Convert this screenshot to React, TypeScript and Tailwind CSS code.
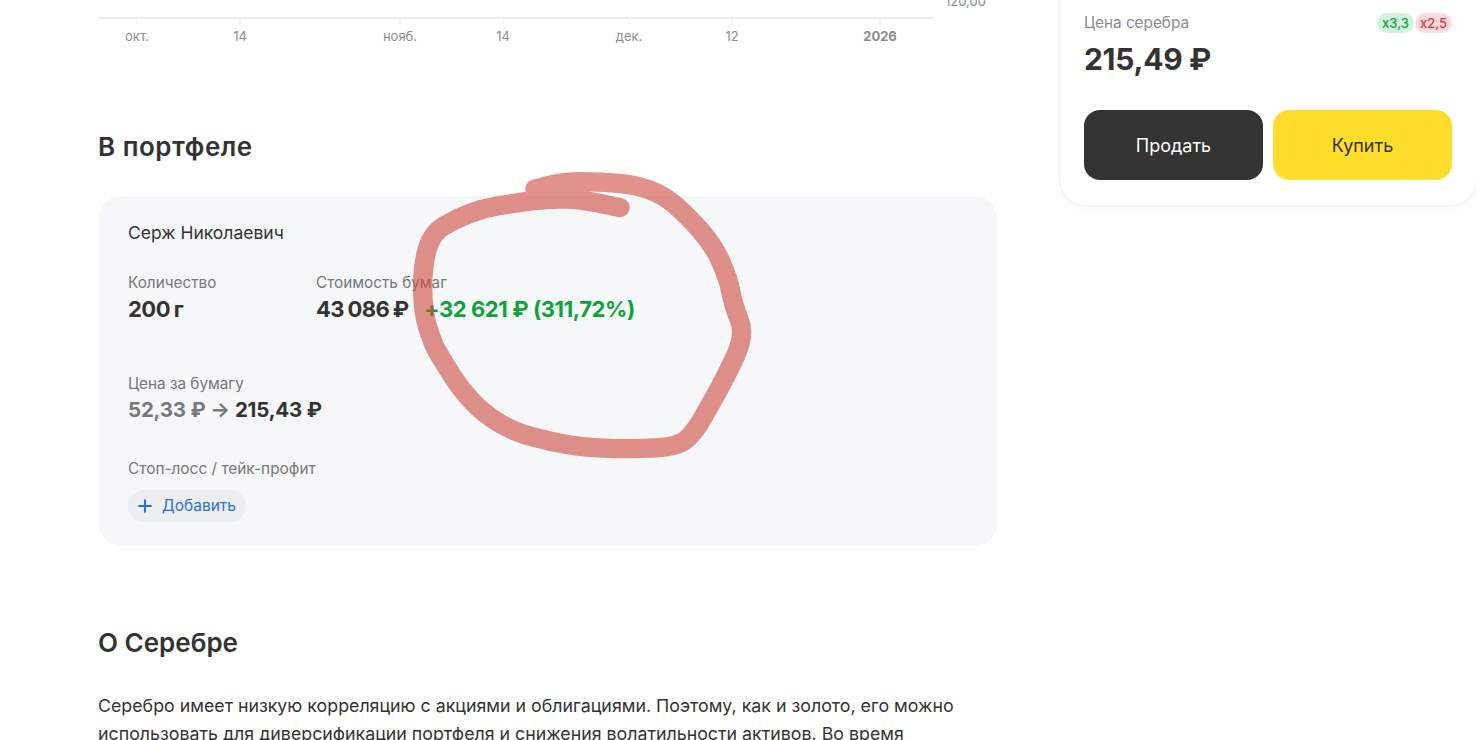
import { Plus } from "lucide-react";

// x positions of the chart's time axis labels; ticks sit on the same spots
const AXIS_TICKS = [
  { label: "окт.", x: 39 },
  { label: "14", x: 142 },
  { label: "нояб.", x: 302 },
  { label: "14", x: 405 },
  { label: "дек.", x: 531 },
  { label: "12", x: 634 },
  { label: "2026", x: 782, bold: true },
];

// Centre line of the marker stroke, in 3x crop coordinates
const MARKER_POINTS = [
  [660, 128], [560, 105], [450, 100], [340, 115], [250, 130], [170, 160], [95, 205], [68, 300],
  [68, 440], [100, 540], [130, 590], [180, 670], [250, 745], [340, 800], [450, 830], [560, 848],
  [700, 852], [835, 845], [885, 800], [930, 720], [975, 640], [1036, 510], [1000, 420], [985, 340],
  [940, 240], [860, 150], [790, 90], [710, 60], [600, 50], [490, 50], [405, 72],
];

// Round the corners: quadratic segments through the midpoints
function smoothPath(points: number[][]) {
  let d = `M${points[0][0]} ${points[0][1]}`;
  for (let i = 1; i < points.length - 1; i++) {
    const [x, y] = points[i];
    const [nx, ny] = points[i + 1];
    d += ` Q${x} ${y} ${(x + nx) / 2} ${(y + ny) / 2}`;
  }
  const last = points[points.length - 1];
  return `${d} L${last[0]} ${last[1]}`;
}

function PriceChart() {
  return (
    <svg width="900" height="48" viewBox="0 0 900 48" className="block">
      <line x1="0" y1="18" x2="836" y2="18" stroke="#e8e9eb" strokeWidth="1.5" />
      {AXIS_TICKS.map((t) => (
        <g key={t.label + t.x}>
          <line x1={t.x} y1="18" x2={t.x} y2="24" stroke="#e8e9eb" />
          <text
            x={t.x}
            y="41"
            textAnchor="middle"
            fontSize="13"
            fontWeight={t.bold ? 700 : 400}
            fill="#8b8c8e"
          >
            {t.label}
          </text>
        </g>
      ))}
      <text x="847" y="6" fontSize="13" fill="#8b8c8e">
        120,00
      </text>
    </svg>
  );
}

// Hand-drawn marker circle lying over the portfolio card
function MarkerCircle() {
  return (
    <svg
      viewBox="0 0 1110 900"
      className="absolute left-[400px] top-[165px] w-[370px] h-[300px] opacity-60 pointer-events-none"
    >
      <path
        d={smoothPath(MARKER_POINTS)}
        fill="none"
        stroke="#cf4a3e"
        strokeWidth="58"
        strokeLinecap="round"
        strokeLinejoin="round"
      />
    </svg>
  );
}

export default function App() {
  return (
    <div className="relative h-[740px] overflow-hidden bg-white font-['Inter',sans-serif] text-[#333333]">
      <div className="flex items-start">
        <main className="ml-[98px] w-[900px] shrink-0">
          <PriceChart />

          <h2 className="mt-[82px] text-[26px] leading-[34px] font-semibold tracking-[0.5px]">В портфеле</h2>

          <section className="mt-[32px] h-[350px] rounded-[24px] bg-[#f6f7f8] px-[30px] pt-[25px]">
            <div className="text-[17.5px] leading-6">Серж Николаевич</div>

            <div className="mt-[28px] flex">
              <div className="w-[188px]">
                <div className="text-[15.3px] leading-5 text-[#77787a]">Количество</div>
                <div className="mt-[3px] text-[22px] leading-[26px] font-bold tracking-[-0.5px] [word-spacing:-1px]">
                  200 г
                </div>
              </div>
              <div>
                <div className="text-[15.3px] leading-5 text-[#77787a]">Стоимость бумаг</div>
                <div className="mt-[3px] flex gap-4 text-[22px] leading-[26px] font-bold tracking-[-0.4px] whitespace-nowrap">
                  <span className="tracking-[-0.6px] [word-spacing:-1px]">43 086 ₽</span>
                  <span className="text-[#0ea33a]">+32 621 ₽ (311,72%)</span>
                </div>
              </div>
            </div>

            <div className="mt-[52px] text-[15.3px] leading-5 text-[#77787a]">Цена за бумагу</div>
            <div className="mt-[3px] flex items-center text-[20.5px] leading-[26px] font-bold tracking-[-0.2px] whitespace-nowrap">
              <span className="text-[#77787a]">52,33 ₽</span>
              <span className="mx-[5px] text-[#77787a]">→</span>
              <span>215,43 ₽</span>
            </div>

            <div className="mt-[36px] text-[15.4px] leading-5 text-[#77787a]">Стоп-лосс / тейк-профит</div>
            <button className="mt-[11px] flex h-[32px] items-center gap-[7px] rounded-full bg-[#eceef1] pl-[7px] pr-[10px] text-[15.5px] text-[#2a70d8]">
              <Plus size={20} strokeWidth={2.5} />
              Добавить
            </button>
          </section>

          <h2 className="mt-[80px] text-[26px] leading-[34px] font-semibold">О Серебре</h2>

          <p className="mt-[32px] text-[17.8px] leading-[28px]">
            Серебро имеет низкую корреляцию с акциями и облигациями. Поэтому, как и золото, его можно использовать для
            диверсификации портфеля и снижения волатильности активов. Во время
          </p>
        </main>

        <aside className="ml-[61px] w-[418px] shrink-0 -mt-[20px] h-[226px] rounded-b-[26px] border border-[#eef0f2] px-[24px] pt-[32px] shadow-[0_2px_6px_rgba(0,0,0,0.03)]">
          <div className="flex items-start justify-between">
            <div className="text-[15.3px] leading-5 text-[#8b8c8e]">Цена серебра</div>
            <div className="flex gap-[1px] text-[13px] leading-5 font-medium">
              <span className="rounded-full bg-[#d3f2dc] px-[5px] text-[#0ea33a]">x3,3</span>
              <span className="rounded-full bg-[#fcdcdc] px-[5px] text-[#e5333a]">x2,5</span>
            </div>
          </div>
          <div className="mt-[7px] text-[30px] leading-[38px] font-bold tracking-[-0.3px]">215,49 ₽</div>
          <div className="mt-[32px] flex gap-[10px]">
            <button className="h-[70px] flex-1 rounded-[16px] bg-[#333333] text-[18px] text-white">Продать</button>
            <button className="h-[70px] flex-1 rounded-[16px] bg-[#ffdd2d] text-[18px] text-[#333333]">Купить</button>
          </div>
        </aside>
      </div>

      <MarkerCircle />
    </div>
  );
}
